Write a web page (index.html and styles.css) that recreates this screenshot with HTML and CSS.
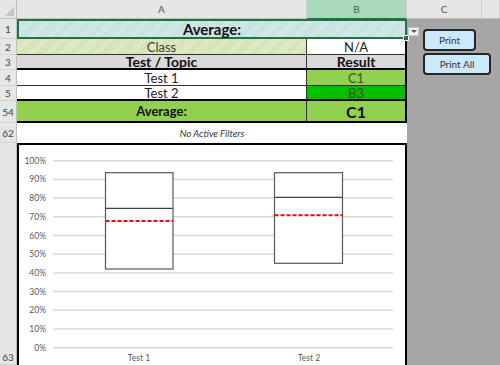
FILE: index.html
```html
<!DOCTYPE html>
<html lang="en">
<head>
    <meta charset="UTF-8">
    <title>Results Sheet</title>
    <link rel="stylesheet" href="styles.css">
</head>
<body>
    <div class="sheet">
        <!-- Column headers -->
        <div class="corner"><span class="corner-tri"></span></div>
        <div class="colhead">A</div>
        <div class="colhead active">B</div>
        <div class="colhead">C</div>
        <div class="colhead"></div>

        <!-- Row 1 -->
        <div class="rowhead">1</div>
        <div class="cell title span2">Average:<span class="handle"></span></div>
        <div class="off span2"></div>

        <!-- Row 2 -->
        <div class="rowhead">2</div>
        <div class="cell hatch-green">Class</div>
        <div class="cell plain right-edge">N/A</div>
        <div class="off span2"></div>

        <!-- Row 3 -->
        <div class="rowhead">3</div>
        <div class="cell heading">Test / Topic</div>
        <div class="cell heading right-edge">Result</div>
        <div class="off span2"></div>

        <!-- Row 4 -->
        <div class="rowhead">4</div>
        <div class="cell plain">Test 1</div>
        <div class="cell grade right-edge">C1</div>
        <div class="off span2"></div>

        <!-- Row 5 -->
        <div class="rowhead">5</div>
        <div class="cell plain thick-bottom">Test 2</div>
        <div class="cell grade bright right-edge thick-bottom">B3</div>
        <div class="off span2"></div>

        <!-- Row 54 -->
        <div class="rowhead">54</div>
        <div class="cell total">Average:</div>
        <div class="cell total big right-edge">C1</div>
        <div class="off span2"></div>

        <!-- Row 62 -->
        <div class="rowhead">62</div>
        <div class="cell filters span2">No Active Filters</div>
        <div class="off span2"></div>

        <!-- Row 63: chart -->
        <div class="rowhead bottom">63</div>
        <div class="chart span2">
            <svg width="390" height="222" viewBox="0 0 390 222">
                <g stroke="#d9d9d9" stroke-width="1.5">
                    <line x1="36" y1="17.7" x2="376" y2="17.7"/>
                    <line x1="36" y1="36.4" x2="376" y2="36.4"/>
                    <line x1="36" y1="55.1" x2="376" y2="55.1"/>
                    <line x1="36" y1="73.8" x2="376" y2="73.8"/>
                    <line x1="36" y1="92.5" x2="376" y2="92.5"/>
                    <line x1="36" y1="111.2" x2="376" y2="111.2"/>
                    <line x1="36" y1="129.9" x2="376" y2="129.9"/>
                    <line x1="36" y1="148.6" x2="376" y2="148.6"/>
                    <line x1="36" y1="167.3" x2="376" y2="167.3"/>
                    <line x1="36" y1="186" x2="376" y2="186"/>
                    <line x1="36" y1="204.7" x2="376" y2="204.7"/>
                </g>
                <g class="axis" text-anchor="end">
                    <text x="29" y="20.7">100%</text>
                    <text x="29" y="39.4">90%</text>
                    <text x="29" y="58.1">80%</text>
                    <text x="29" y="76.8">70%</text>
                    <text x="29" y="95.5">60%</text>
                    <text x="29" y="114.2">50%</text>
                    <text x="29" y="132.9">40%</text>
                    <text x="29" y="151.6">30%</text>
                    <text x="29" y="170.3">20%</text>
                    <text x="29" y="189">10%</text>
                    <text x="29" y="207.7">0%</text>
                </g>
                <!-- Test 1 box -->
                <rect x="88.5" y="29.7" width="67.5" height="96.3" fill="#fff" stroke="#595959" stroke-width="1.2"/>
                <line x1="88.5" y1="65.3" x2="156" y2="65.3" stroke="#404040" stroke-width="1.2"/>
                <line x1="88.5" y1="78" x2="156" y2="78" stroke="#ff0000" stroke-width="2" stroke-dasharray="4 2"/>
                <!-- Test 2 box -->
                <rect x="257.5" y="29.7" width="68" height="90.6" fill="#fff" stroke="#595959" stroke-width="1.2"/>
                <line x1="257.5" y1="54.3" x2="325.5" y2="54.3" stroke="#404040" stroke-width="1.2"/>
                <line x1="257.5" y1="72.3" x2="325.5" y2="72.3" stroke="#ff0000" stroke-width="2" stroke-dasharray="4 2"/>
                <g class="axis" text-anchor="middle">
                    <text x="122" y="218">Test 1</text>
                    <text x="292" y="218">Test 2</text>
                </g>
            </svg>
        </div>
        <div class="off span2"></div>
    </div>

    <!-- Controls floating over the sheet -->
    <div class="dropdown"><span class="arrow"></span></div>
    <button class="sheet-btn print">Print</button>
    <button class="sheet-btn print-all">Print All</button>
</body>
</html>
```

FILE: styles.css
```css
/* Basic Styling */
body {
    margin: 0;
    width: 500px;
    height: 365px;
    overflow: hidden;
    background-color: #a6a6a6;
    font-family: Lato, "Liberation Sans", sans-serif;
    position: relative;
}

/* Sheet grid */
.sheet {
    display: grid;
    grid-template-columns: 17px 290px 100px 75px 1fr;
    grid-template-rows: 19px 20px 16px 15px 16px 15px 22px 20px 1fr;
    width: 500px;
    height: 365px;
}

.span2 {
    grid-column: span 2;
}

/* Headers */
.corner {
    background: #e6e6e6;
    border-right: 1px solid #bfbfbf;
    border-bottom: 1px solid #bfbfbf;
    box-sizing: border-box;
    position: relative;
}

.corner-tri {
    position: absolute;
    right: 2px;
    bottom: 2px;
    width: 0;
    height: 0;
    border-left: 9px solid transparent;
    border-bottom: 9px solid #c4c4c4;
}

.colhead {
    background: #e6e6e6;
    border-right: 1px solid #d0d0d0;
    border-bottom: 1px solid #bfbfbf;
    box-sizing: border-box;
    display: flex;
    justify-content: center;
    align-items: center;
    font-size: 10px;
    color: #555;
}

.colhead.active {
    background: #a9d8bd;
    color: #2f6f45;
    border-bottom: 1px solid #217346;
}

.rowhead {
    background: #e6e6e6;
    border-right: 1px solid #bfbfbf;
    border-bottom: 1px solid #d4d4d4;
    box-sizing: border-box;
    display: flex;
    justify-content: center;
    align-items: center;
    font-size: 10px;
    color: #444;
}

.rowhead.bottom {
    align-items: flex-end;
    padding-bottom: 1px;
}

/* Cells */
.cell {
    box-sizing: border-box;
    display: flex;
    justify-content: center;
    align-items: center;
    font-size: 13px;
    color: #222;
    border-right: 1px solid #333;
    border-bottom: 1px solid #333;
    white-space: nowrap;
}

.right-edge {
    border-right: 2px solid #000;
}

.thick-bottom {
    border-bottom: 2px solid #000;
}

.title {
    position: relative;
    border: 2px solid #217346;
    font-weight: bold;
    font-size: 15px;
    color: #111;
    background: repeating-linear-gradient(135deg, #c0e0e2 0 1px, #d5ebe6 1px 2px);
}

.handle {
    position: absolute;
    right: -4px;
    bottom: -4px;
    width: 4px;
    height: 4px;
    background: #217346;
    border: 1px solid #fff;
}

.hatch-green {
    color: #404040;
    background: repeating-linear-gradient(135deg, #d0dfae 0 1px, #e5edcf 1px 2px);
}

.plain {
    background: #fff;
}

.heading {
    background: #d9d9d9;
    font-weight: bold;
    font-size: 14px;
    color: #111;
    border-bottom: 2px solid #000;
}

.grade {
    background: #92d050;
    color: #375623;
}

.grade.bright {
    background: #00c000;
}

.total {
    background: #92d050;
    font-weight: bold;
    color: #111;
    border-bottom: 2px solid #000;
}

.total.big {
    font-size: 16px;
}

.filters {
    background: #fff;
    font-style: italic;
    font-size: 9.5px;
    color: #333;
    border: none;
}

.off {
    background: transparent;
}

/* Chart */
.chart {
    background: #fff;
    border-top: 2px solid #000;
    border-left: 2px solid #000;
    border-right: 2px solid #000;
    box-sizing: border-box;
    overflow: hidden;
}

.chart svg {
    display: block;
    margin-left: -2px;
    margin-top: -2px;
}

.axis {
    font-family: Lato, "Liberation Sans", sans-serif;
    font-size: 8.5px;
    fill: #595959;
}

/* Floating controls */
.dropdown {
    position: absolute;
    left: 408px;
    top: 27px;
    width: 11px;
    height: 9px;
    background: #f2f2f2;
    border: 1px solid #c8c8c8;
    box-sizing: border-box;
    display: flex;
    justify-content: center;
    align-items: center;
}

.arrow {
    width: 0;
    height: 0;
    border-left: 3px solid transparent;
    border-right: 3px solid transparent;
    border-top: 3px solid #555;
}

.sheet-btn {
    position: absolute;
    left: 423px;
    background: #cce8fb;
    border: 2px solid #262626;
    border-radius: 4px;
    font-family: Lato, "Liberation Sans", sans-serif;
    font-size: 10px;
    color: #333;
    padding: 0;
    cursor: pointer;
}

.print {
    top: 29px;
    width: 53px;
    height: 22px;
}

.print-all {
    top: 53px;
    width: 68px;
    height: 22px;
}
```
